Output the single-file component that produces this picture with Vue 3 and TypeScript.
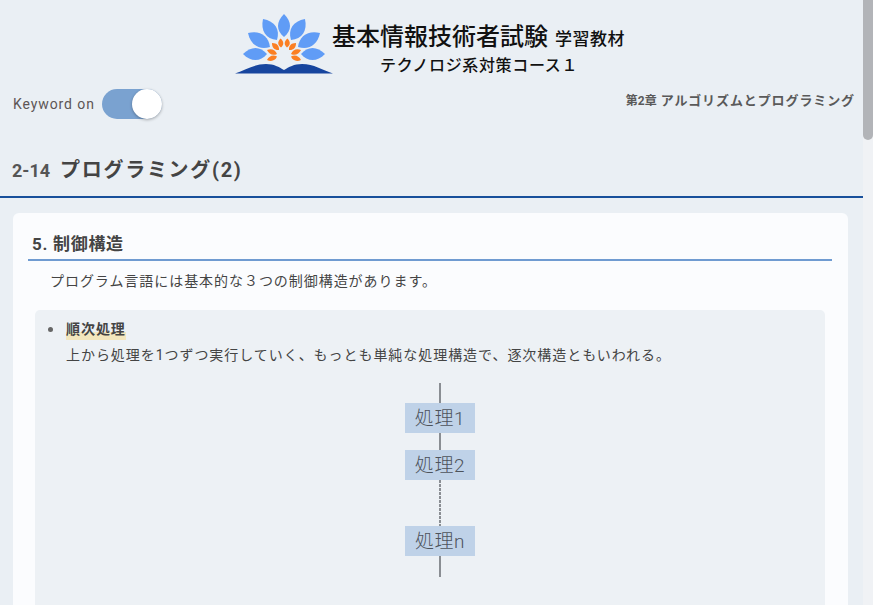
<script setup lang="ts">
function leaf(tx: number, ty: number, bx: number, by: number, w: number): string {
  const dx = bx - tx
  const dy = by - ty
  const len = Math.hypot(dx, dy)
  const nx = (-dy / len) * w * 0.67
  const ny = (dx / len) * w * 0.67
  const a = (t: number, s: number) => `${(tx + dx * t + nx * s).toFixed(1)} ${(ty + dy * t + ny * s).toFixed(1)}`
  return `M${tx} ${ty} C${a(0.33, 1)} ${a(0.72, 1)} ${bx} ${by} C${a(0.72, -1)} ${a(0.33, -1)} ${tx} ${ty} Z`
}
const cx = 284
const petalDefs: [number, number, number, number, number][] = [
  [-21, 19, -7, 40, 13],
  [-36, 33, -14, 47, 13],
  [-41, 54, -17, 54, 12],
]
const flameDefs: [number, number, number, number, number][] = [
  [-3.5, 38.5, -3, 47.5, 5],
  [-12, 43, -5, 50, 5],
  [-17, 50, -7, 54, 5],
  [-17, 60, -7, 56.5, 5],
]
const petals = [
  leaf(cx, 14, cx, 37, 12),
  ...petalDefs.flatMap(([a, b, c, d, w]) => [leaf(cx + a, b, cx + c, d, w), leaf(cx - a, b, cx - c, d, w)]),
]
const flames = flameDefs.flatMap(([a, b, c, d, w]) => [leaf(cx + a, b, cx + c, d, w), leaf(cx - a, b, cx - c, d, w)])
</script>

<template>
  <div class="viewport">
    <main class="page">
      <header class="brand">
        <svg class="logo" viewBox="235 14 98 60" width="98" height="60" aria-hidden="true">
          <path v-for="(p, i) in petals" :key="'p' + i" :d="p" fill="#609cf6" />
          <path v-for="(f, i) in flames" :key="'f' + i" :d="f" fill="#fb7f23" />
          <path d="M235 73.5 C246 70 254 64 266 64 C274 64 279 67 284 70 C289 67 294 64 302 64 C314 64 322 70 333 73.5 Z" fill="#17459e" />
        </svg>
        <div class="brand-text">
          <div class="brand-main">基本情報技術者試験<span class="brand-sub">学習教材</span></div>
          <div class="brand-course">テクノロジ系対策コース１</div>
        </div>
      </header>

      <div class="toolbar">
        <div class="keyword">
          <span class="keyword-label">Keyword on</span>
          <span class="toggle"><span class="knob"></span></span>
        </div>
        <div class="chapter"><small>第2章</small> アルゴリズムとプログラミング</div>
      </div>

      <h1 class="title"><span class="num">2-14</span>プログラミング(2)</h1>

      <section class="card">
        <h2 class="heading">5. 制御構造</h2>
        <p class="lead">プログラム言語には基本的な３つの制御構造があります。</p>
        <div class="panel">
          <ul class="list">
            <li>
              <strong class="mark">順次処理</strong>
              <p>上から処理を1つずつ実行していく、もっとも単純な処理構造で、逐次構造ともいわれる。</p>
            </li>
          </ul>
          <div class="flow">
            <span class="seg s1"></span>
            <div class="step">処理1</div>
            <span class="seg s2"></span>
            <div class="step">処理2</div>
            <span class="seg dashed"></span>
            <div class="step">処理n</div>
            <span class="seg s3"></span>
          </div>
        </div>
      </section>
    </main>
    <div class="scrollbar"><div class="thumb"></div></div>
  </div>
</template>

<style>
html, body { margin: 0; padding: 0; overflow: hidden; }
</style>

<style scoped>
.viewport {
  display: flex;
  width: 873px;
  height: 605px;
  overflow: hidden;
  background: #eaeff4;
  font-family: Roboto, "Noto Sans CJK JP", sans-serif;
  color: #4a4a4a;
}
.page { flex: 1; min-width: 0; overflow: hidden; }
.scrollbar { width: 10px; background: #f0f2f5; flex: none; }
.thumb { height: 140px; background: #b2b4b8; border-radius: 0 0 5px 5px; }

.brand {
  display: flex;
  justify-content: flex-start;
  padding: 14px 0 0 235px;
  height: 74px;
  box-sizing: border-box;
}
.logo { display: block; flex: none; margin-right: -1px; }
.brand-text { color: #111; margin-top: 6px; font-family: "Noto Sans CJK JP", sans-serif; }
.brand-main { font-size: 24px; font-weight: 500; line-height: 30px; white-space: nowrap; }
.brand-sub { font-size: 17px; margin-left: 7px; letter-spacing: .5px; }
.brand-course { font-size: 16px; font-weight: 500; line-height: 24px; letter-spacing: .65px; margin-top: -1px; padding-left: 48px; white-space: nowrap; }

.toolbar { display: flex; justify-content: space-between; align-items: flex-start; padding: 15px 8px 0 13px; height: 45px; }
.keyword { display: flex; align-items: center; gap: 7px; }
.keyword-label { font-size: 14px; letter-spacing: 0.9px; color: #5d5555; }
.toggle { display: block; width: 60px; height: 30px; border-radius: 15px; background: #7aa2d0; position: relative; }
.knob { position: absolute; right: 0; top: 0; width: 30px; height: 30px; border-radius: 50%; background: #fff; box-shadow: 0 1px 3px rgba(0,0,0,.3); }
.chapter { font-size: 13px; font-weight: 700; color: #5a5a5a; letter-spacing: 0.9px; margin-top: 1px; }
.chapter small { font-size: 12px; letter-spacing: 0; }

.title {
  margin: 0;
  padding: 22px 12px 10px;
  height: 30px;
  font-size: 20px;
  line-height: 28px;
  font-weight: 700;
  letter-spacing: 1.7px;
  color: #444;
  border-bottom: 2px solid #18509b;
  box-sizing: content-box;
}
.num { font-size: 18px; letter-spacing: 0; margin-right: 10px; color: #555; }

.card { margin: 15px 15px 0 13px; background: #fbfcfe; border-radius: 6px; padding: 19px 16px 0 15px; height: 500px; box-sizing: border-box; }
.heading { margin: 0; padding: 0 4px 3px; font-size: 17px; line-height: 24px; font-weight: 700; color: #444; border-bottom: 2px solid #6f9bd1; letter-spacing: .7px; }
.lead { margin: 10px 0 0; padding-left: 22px; font-size: 14px; line-height: 21px; letter-spacing: .95px; color: #444; }
.panel { margin: 18px 7px 0; background: #edf1f5; border-radius: 5px; padding: 9px 0 0; height: 400px; box-sizing: border-box; }
.list { margin: 0; padding: 0 0 0 31px; font-size: 14px; line-height: 21px; list-style: none; }
.list li { position: relative; }
.list li::before { content: ""; position: absolute; left: -18px; top: 8px; width: 5px; height: 5px; border-radius: 50%; background: #666; }
.mark { font-weight: 700; color: #444; background: linear-gradient(transparent 60%, #f3e6bd 60%); letter-spacing: .95px; display: inline-block; line-height: 21px; }
.list p { margin: 5px 0 0; letter-spacing: .95px; color: #444; }

.flow { display: flex; flex-direction: column; align-items: center; margin-top: 17px; padding-left: 20px; }
.seg { display: block; width: 2px; background: #8a8e93; }
.s1 { height: 20px; }
.s2 { height: 17px; }
.s3 { height: 21px; }
.dashed { height: 46px; background: repeating-linear-gradient(to bottom, #8a8e93 0 3px, transparent 3px 4px); }
.step { width: 70px; height: 30px; line-height: 32px; text-align: center; background: #bfd2e8; font-size: 19px; letter-spacing: .6px; color: #4d535b; font-weight: 300; }
</style>
